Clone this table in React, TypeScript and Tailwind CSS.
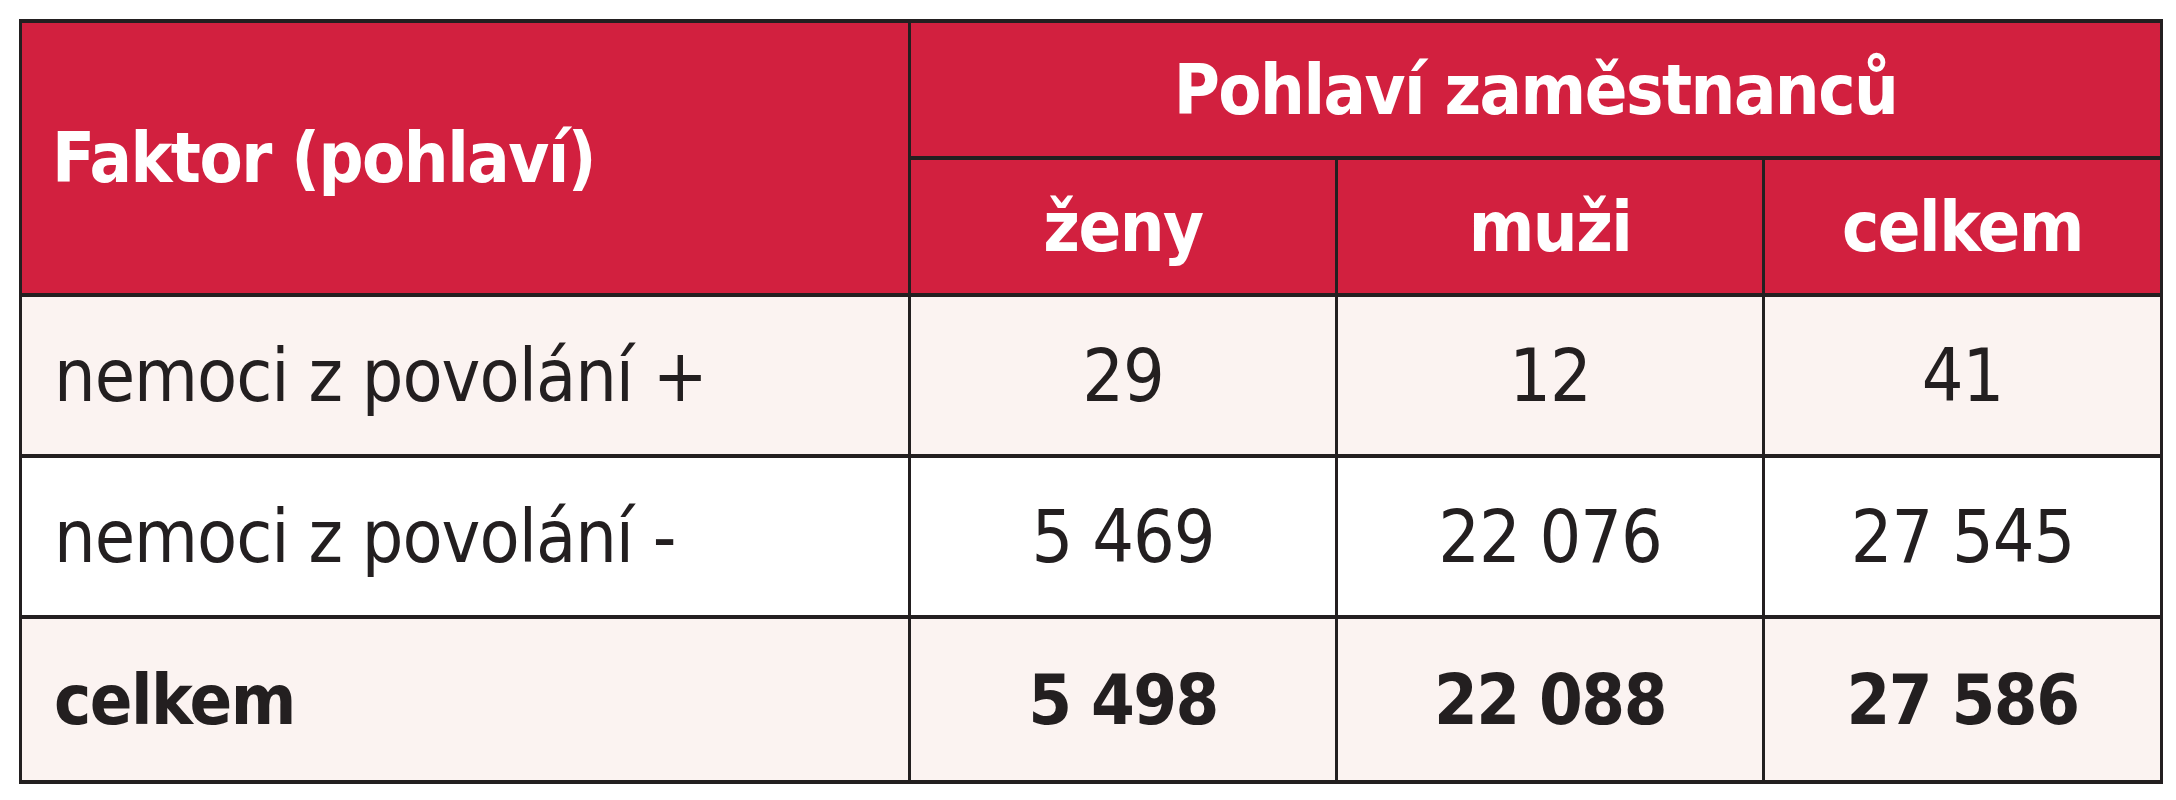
const font = { fontFamily: "'DejaVu Sans Condensed', 'Liberation Sans Narrow', 'Liberation Sans', sans-serif" };

const rows = [
  { label: "nemoci z povolání +", values: ["29", "12", "41"], bg: "bg-[#fbf3f1]", bold: false },
  { label: "nemoci z povolání -", values: ["5 469", "22 076", "27 545"], bg: "bg-white", bold: false },
  { label: "celkem", values: ["5 498", "22 088", "27 586"], bg: "bg-[#fbf3f1]", bold: true },
];

const cell = "border-y-[4px] border-x-[3px] border-[#231f20] align-middle leading-none";
const head = `${cell} bg-[#d2203f] text-white font-bold text-[70px] tracking-[-1.5px]`;

export default function App() {
  return (
    <div className="min-h-screen bg-white pt-[19px] pl-[19px]" style={font}>
      <table className="table-fixed border-collapse w-[2141px] text-[#231f20]">
        <colgroup>
          <col className="w-[889px]" />
          <col className="w-[427px]" />
          <col className="w-[427px]" />
          <col className="w-[398px]" />
        </colgroup>
        <thead>
          <tr className="h-[137px]">
            <th rowSpan={2} className={`${head} text-left pl-[30px]`}>
              Faktor (pohlaví)
            </th>
            <th colSpan={3} className={`${head} text-center`}>
              Pohlaví zaměstnanců
            </th>
          </tr>
          <tr className="h-[137px]">
            {["ženy", "muži", "celkem"].map((h) => (
              <th key={h} className={`${head} text-center`}>
                {h}
              </th>
            ))}
          </tr>
        </thead>
        <tbody>
          {rows.map((r, i) => {
            const type = r.bold
              ? "font-bold text-[70px] tracking-[-1.5px]"
              : "font-normal text-[73px] tracking-[-1px]";
            return (
              <tr key={r.label} className={i === 2 ? "h-[165px]" : "h-[161px]"}>
                <td className={`${cell} ${r.bg} ${type} pl-[32px]`}>{r.label}</td>
                {r.values.map((v, j) => (
                  <td key={j} className={`${cell} ${r.bg} ${type} text-center`}>
                    {v}
                  </td>
                ))}
              </tr>
            );
          })}
        </tbody>
      </table>
    </div>
  );
}
